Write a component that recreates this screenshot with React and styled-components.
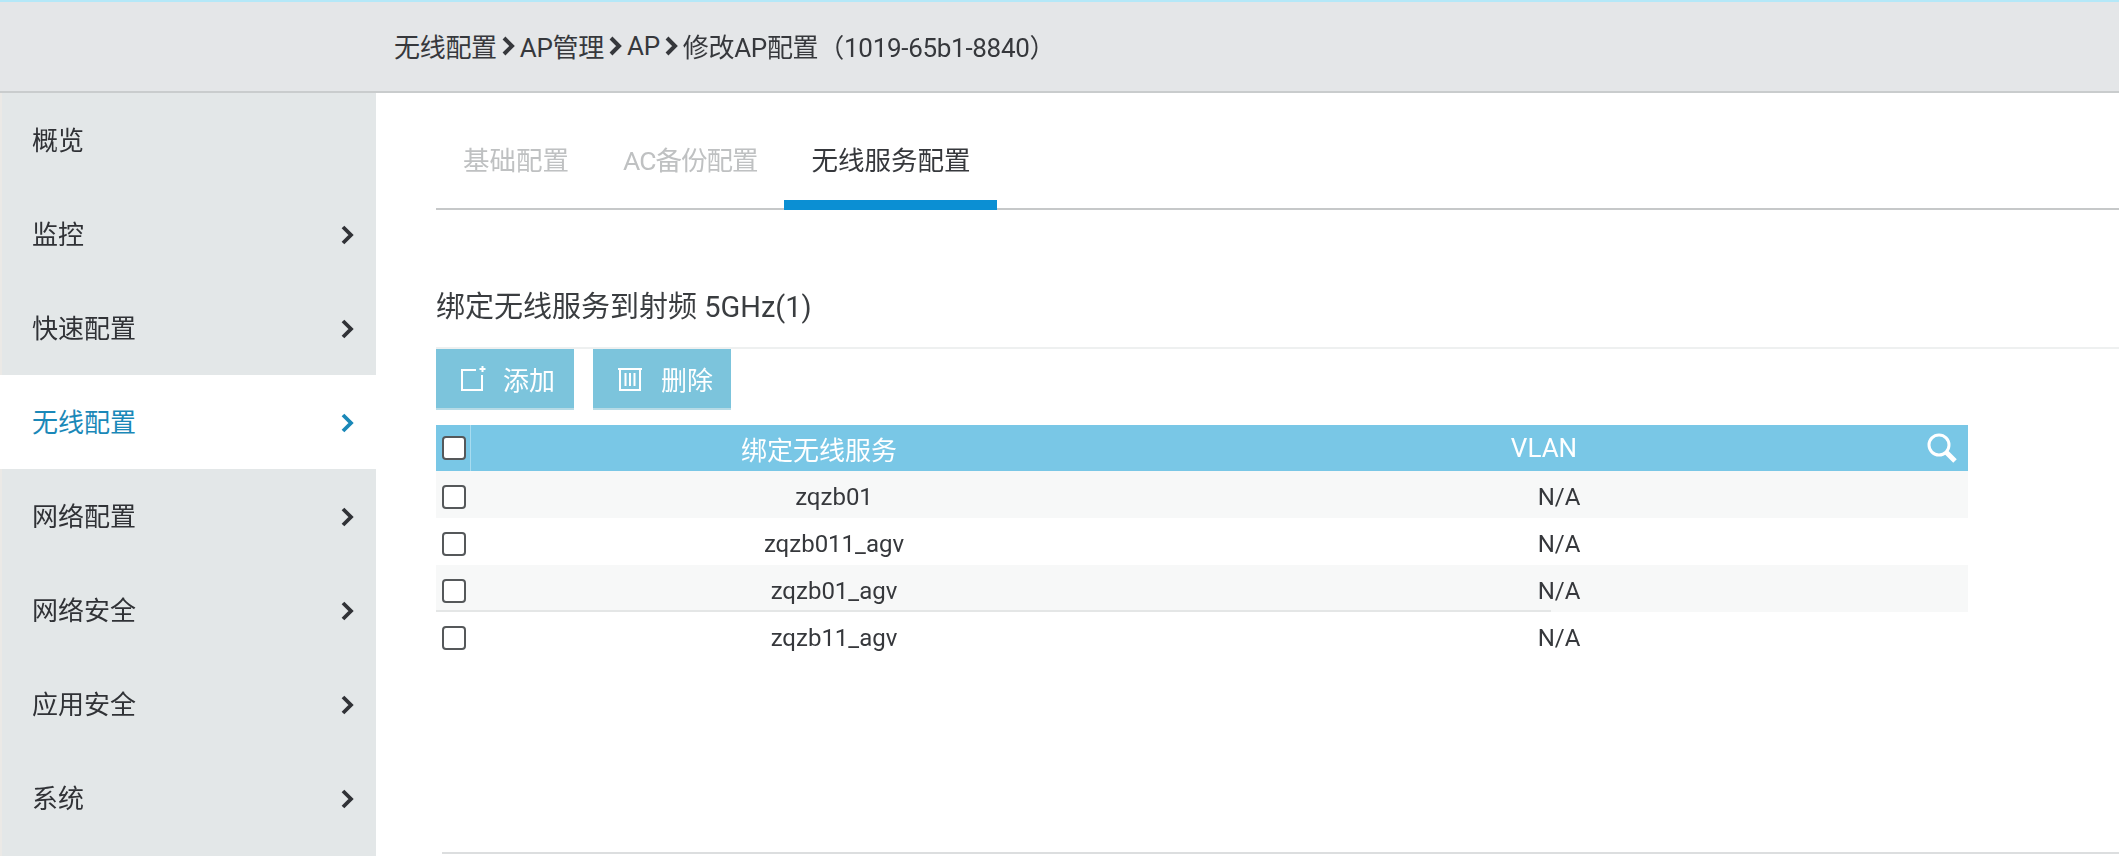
import React from "react";
import styled, { createGlobalStyle } from "styled-components";

const Global = createGlobalStyle`
  html, body { margin: 0; padding: 0; background: #fff; }
  body {
    width: 2119px; height: 856px; overflow: hidden;
    font-family: Roboto, "Noto Sans CJK SC", sans-serif;
    color: #3a3d40;
  }
  * { box-sizing: border-box; }
`;

const Page = styled.div`
  display: flex; flex-direction: column;
  width: 2119px; height: 856px; overflow: hidden;
  border-top: 2px solid #b4e8f8;
  filter: blur(0.45px);
`;
const TopBar = styled.header`
  flex: none; height: 91px; padding: 0 0 2px 394px;
  display: flex; align-items: center;
  background: #e4e6e8;
  border-bottom: 2px solid #c9cccd;
  font-size: 26px; color: #36383c;
`;
const Crumb = styled.span`white-space: nowrap; letter-spacing: -0.3px;`;
const CrumbArrow = styled.svg`
  flex: none; width: 14px; height: 22px; margin: 0 5px 0 4px;
  fill: none; stroke: #36383c; stroke-width: 4;
`;
const Body = styled.div`flex: 1; display: flex; min-height: 0;`;
const Sidebar = styled.nav`
  flex: none; width: 376px;
  background: #e3e7e8;
  border-left: 2px solid #ebe9e6;
  display: flex; flex-direction: column;
`;
const NavItem = styled.div`
  flex: none; height: 94px; margin-left: ${(p) => (p.$active ? "-2px" : "0")};
  padding: 0 22px 0 ${(p) => (p.$active ? "32px" : "30px")};
  display: flex; align-items: center; justify-content: space-between;
  font-size: 26px;
  background: ${(p) => (p.$active ? "#fff" : "transparent")};
  color: ${(p) => (p.$active ? "#1a88b8" : "#303236")};
`;
const NavLabel = styled.span`padding-bottom: 4px;`;
const Chevron = styled.svg`
  width: 13px; height: 22px; margin-top: 2px; fill: none;
  stroke: currentColor; stroke-width: 3.8;
`;
const Main = styled.main`
  flex: 1; min-width: 0; padding: 0 0 0 60px;
  display: flex; flex-direction: column;
`;
const Tabs = styled.div`
  flex: none; height: 117px; padding-top: 24px;
  display: flex; align-items: stretch;
  border-bottom: 2px solid #c6c8c9;
`;
const Tab = styled.div`
  height: 93px; padding: 0 27px 0;
  display: flex; align-items: center; font-size: 26.5px; white-space: nowrap;
  letter-spacing: ${(p) => (p.$tight ? "-1px" : "0")};
  color: ${(p) => (p.$active ? "#36383c" : "#bfc1c2")};
  border-bottom: ${(p) => (p.$active ? "10px solid #0b8fd3" : "10px solid transparent")};
`;
const Heading = styled.h2`
  margin: 0; height: 139px; padding-top: 69px; flex: none;
  font-size: 29px; font-weight: 400; line-height: 56px; color: #3a3d40;
  border-bottom: 2px solid #eef0f0; white-space: nowrap;
`;
const Toolbar = styled.div`
  flex: none; display: flex; gap: 19px; height: 61px; margin: 0 0 15px;
`;
const ActionButton = styled.button`
  width: 138px; height: 61px; border: 0; border-bottom: 2px solid #b7dbe6; padding: 0 0 0 ${(p) => p.$pad}px;
  display: flex; align-items: center; gap: ${(p) => p.$gap}px;
  background: #7cc4dc; color: #fff; font: inherit; font-size: 26px;
`;
const ButtonIcon = styled.svg`
  flex: none; width: 26px; height: 26px; fill: none; stroke: #fff; stroke-width: 2;
`;
const TableWrap = styled.div`width: 1532px; flex: none;`;
const HeaderRow = styled.div`
  display: grid; grid-template-columns: 35px 726px 724px 47px; align-items: center;
  height: 46px; background: #79c7e6; color: #fff; font-size: 26px; font-weight: 400;
`;
const Row = styled.div`
  display: grid; grid-template-columns: 35px 726px 724px 47px; align-items: center;
  height: 47px; padding-top: 4px; font-size: 24px; color: #36383c;
  background-color: ${(p) => (p.$shade ? "#f7f8f8" : "#fff")};
  background-image: ${(p) => (p.$rule ? "linear-gradient(#e4e6e6, #e4e6e6)" : "none")};
  background-size: 1115px 2px;
  background-position: left bottom;
  background-repeat: no-repeat;
`;
const CheckCell = styled.div`
  height: 100%; display: flex; align-items: center; padding-left: 6px;
  border-right: ${(p) => (p.$divider ? "1px solid #a8dcf0" : "0")};
`;
const CheckBox = styled.input.attrs({ type: "checkbox" })`
  appearance: none; margin: 0; width: 24px; height: 24px;
  background: #fff; border: 2px solid #55585a; border-radius: 4px;
`;
const Cell = styled.div`
  text-align: center; white-space: nowrap;
  padding-right: ${(p) => p.$shift || 0}px;
`;
const SearchCell = styled.div`display: flex; align-items: center; justify-content: center; padding-right: 6px;`;
const SearchIcon = styled.svg`width: 32px; height: 32px; fill: none; stroke: #fff;`;
const FootLine = styled.div`
  flex: none; margin-top: auto; margin-bottom: 2px; margin-left: 6px; height: 2px; background: #dcdedf;
`;

const Arrow = () => (
  <CrumbArrow viewBox="0 0 14 22"><path d="M3 3l8 8-8 8" /></CrumbArrow>
);
const menu = ["概览", "监控", "快速配置", "无线配置", "网络配置", "网络安全", "应用安全", "系统"];
const rows = ["zqzb01", "zqzb011_agv", "zqzb01_agv", "zqzb11_agv"];

export default function App() {
  return (
    <Page>
      <Global />
      <TopBar>
        <Crumb>无线配置</Crumb><Arrow />
        <Crumb>AP管理</Crumb><Arrow />
        <Crumb>AP</Crumb><Arrow />
        <Crumb>修改AP配置（1019-65b1-8840）</Crumb>
      </TopBar>
      <Body>
        <Sidebar>
          {menu.map((m, i) => (
            <NavItem key={m} $active={m === "无线配置"}>
              <NavLabel>{m}</NavLabel>
              {i > 0 && (
                <Chevron viewBox="0 0 13 22"><path d="M2 3l8 8-8 8" /></Chevron>
              )}
            </NavItem>
          ))}
        </Sidebar>
        <Main>
          <Tabs>
            <Tab>基础配置</Tab>
            <Tab $tight>AC备份配置</Tab>
            <Tab $active>无线服务配置</Tab>
          </Tabs>
          <Heading>绑定无线服务到射频 5GHz(1)</Heading>
          <Toolbar>
            <ActionButton $pad={24} $gap={17}>
              <ButtonIcon viewBox="0 0 26 26">
                <path d="M16 4H2v20h20V9M22.500 0v6M19.500 3h6" />
              </ButtonIcon>
              添加
            </ActionButton>
            <ActionButton $pad={24} $gap={18}>
              <ButtonIcon viewBox="0 0 26 26">
                <path d="M1 3h24M3 3v21h20V3M8.500 7v13M13 7v13M17.500 7v13" />
              </ButtonIcon>
              删除
            </ActionButton>
          </Toolbar>
          <TableWrap>
            <HeaderRow>
              <CheckCell $divider><CheckBox /></CheckCell>
              <Cell $shift={30}>绑定无线服务</Cell>
              <Cell $shift={30}>VLAN</Cell>
              <SearchCell>
                <SearchIcon viewBox="0 0 32 32">
                  <circle cx="13" cy="13" r="10" strokeWidth="3" />
                  <path d="M20 20l9 9" strokeWidth="5" />
                </SearchIcon>
              </SearchCell>
            </HeaderRow>
            {rows.map((r, i) => (
              <Row key={r} $shade={i % 2 === 0} $rule={i === 2}>
                <CheckCell><CheckBox /></CheckCell>
                <Cell>{r}</Cell>
                <Cell>N/A</Cell>
              </Row>
            ))}
          </TableWrap>
          <FootLine />
        </Main>
      </Body>
    </Page>
  );
}
